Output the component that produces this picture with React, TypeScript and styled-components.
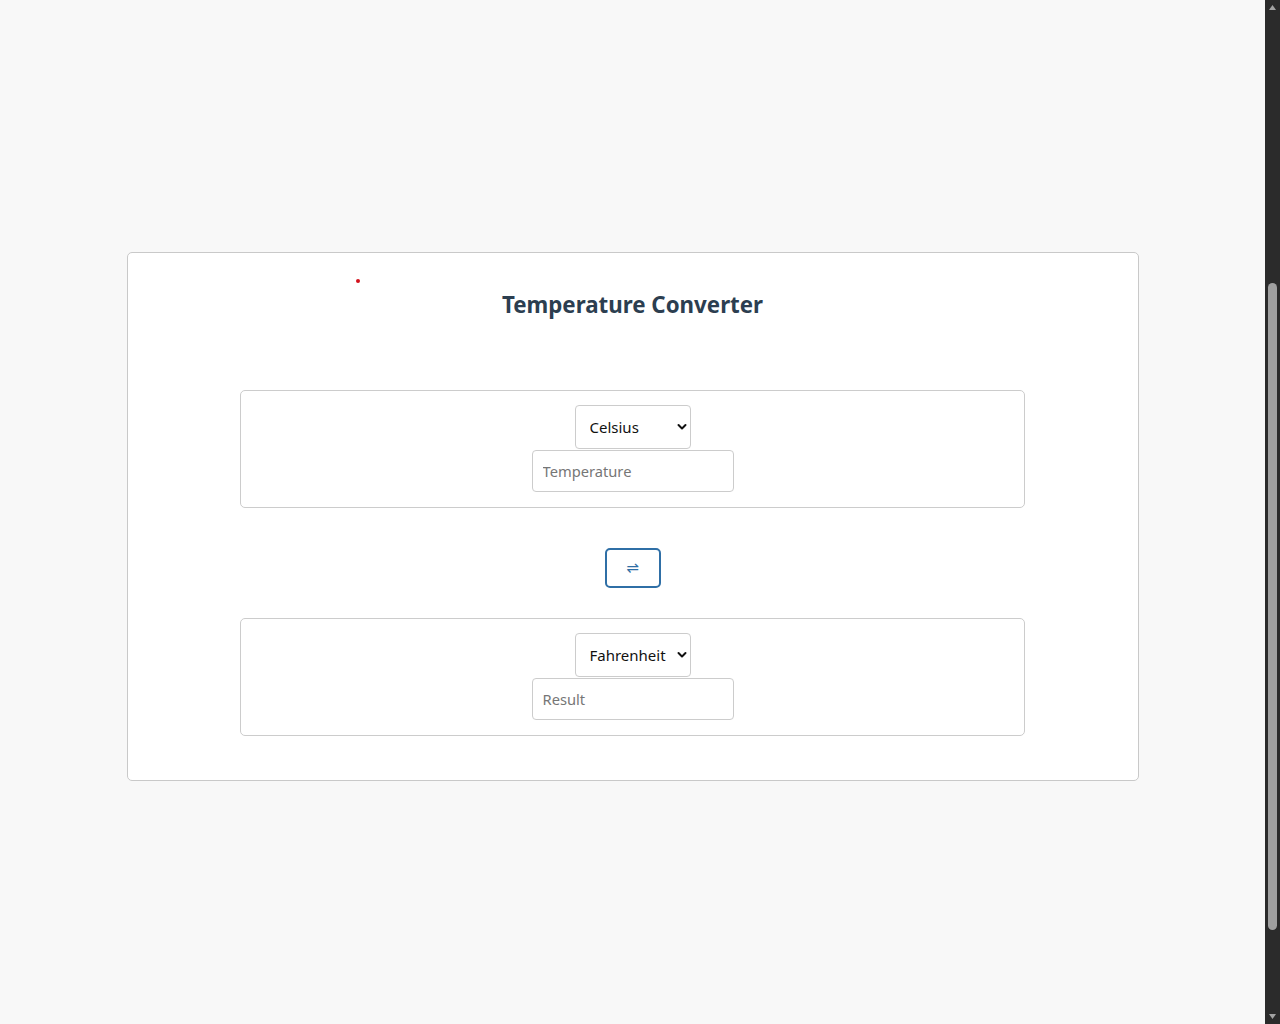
import React, { useState } from "react";
import styled, { createGlobalStyle } from "styled-components";

const GlobalStyle = createGlobalStyle`
  html, body {
    margin: 0;
    background: #f8f8f8;
    overflow: hidden;
  }
  body {
    font-family: "Noto Sans", "Open Sans", "Liberation Sans", sans-serif;
  }
`;

const Page = styled.div`
  box-sizing: border-box;
  height: 100vh;
  margin-right: 15px;
  padding-top: 252px;
  display: flex;
  flex-direction: column;
  align-items: center;
`;

const ScrollBar = styled.div`
  position: fixed;
  top: 0;
  right: 0;
  width: 15px;
  height: 100vh;
  background: #2b2b2b;
  display: flex;
  flex-direction: column;
  align-items: center;
`;

const ScrollArrow = styled.svg`
  flex: none;
  width: 15px;
  height: 16px;
`;

const ScrollTrack = styled.div`
  flex: 1;
  width: 100%;
  display: flex;
  flex-direction: column;
  align-items: center;
`;

const ScrollThumb = styled.div`
  margin-top: 267px;
  width: 9px;
  height: 647px;
  border-radius: 5px;
  background: #a0a0a0;
`;

const Card = styled.section`
  position: relative;
  box-sizing: border-box;
  width: 80%;
  background: #ffffff;
  border: 1px solid #c9c9c9;
  border-radius: 5px;
  padding: 33px 0 44px;
  display: flex;
  flex-direction: column;
  align-items: center;
`;

const Dot = styled.span`
  position: absolute;
  left: 228px;
  top: 26px;
  width: 4px;
  height: 4px;
  border-radius: 50%;
  background: #d3111c;
`;

const Title = styled.h1`
  margin: 0 0 66px;
  font-size: 22.3px;
  line-height: 38px;
  font-weight: 700;
  color: #2c3e50;
`;

const Panel = styled.div`
  box-sizing: border-box;
  width: 785px;
  border: 1px solid #cccccc;
  border-radius: 5px;
  padding: 14px 0 15px;
  display: flex;
  flex-direction: column;
  align-items: center;
  gap: 1px;
`;

const SelectWrap = styled.div`
  position: relative;
  display: inline-flex;
`;

const Select = styled.select`
  appearance: none;
  box-sizing: border-box;
  width: 116px;
  height: 44px;
  padding: 0 0 0 14px;
  border: 1px solid #cccccc;
  border-radius: 4px;
  background: #ffffff;
  color: #111111;
  font-family: inherit;
  font-size: 15px;
  outline: none;
`;

const Chevron = styled.svg`
  position: absolute;
  right: 4px;
  top: 18px;
  width: 10px;
  height: 8px;
  pointer-events: none;
`;

const Input = styled.input`
  box-sizing: border-box;
  width: 202px;
  height: 42px;
  padding: 0 10px;
  border: 1px solid #cccccc;
  border-radius: 4px;
  font-family: inherit;
  font-size: 14.7px;
  color: #222222;
  outline: none;
  &::placeholder {
    color: #767676;
  }
`;

const SwapButton = styled.button`
  box-sizing: border-box;
  width: 56px;
  height: 40px;
  margin: 40px 0 30px;
  border: 2px solid #2f6fa6;
  border-radius: 5px;
  background: #ffffff;
  color: #2f6fa6;
  font-family: "DejaVu Sans", sans-serif;
  font-size: 15px;
  line-height: 1;
  padding: 0;
  cursor: pointer;
`;

type UnitSelectProps = {
  value: string;
  onChange: (v: string) => void;
};

const UnitSelect = ({ value, onChange }: UnitSelectProps) => (
  <SelectWrap>
    <Select value={value} onChange={(e) => onChange(e.target.value)}>
      <option value="Celsius">Celsius</option>
      <option value="Fahrenheit">Fahrenheit</option>
      <option value="Kelvin">Kelvin</option>
    </Select>
    <Chevron viewBox="0 0 10 8">
      <polyline
        points="1.5,2 5,5.5 8.5,2"
        fill="none"
        stroke="#111"
        strokeWidth="2"
        strokeLinecap="round"
        strokeLinejoin="round"
      />
    </Chevron>
  </SelectWrap>
);

export default function App() {
  const [from, setFrom] = useState("Celsius");
  const [to, setTo] = useState("Fahrenheit");
  const [value, setValue] = useState("");

  const convert = (): string => {
    const n = parseFloat(value);
    if (isNaN(n)) return "";
    let c = n;
    if (from === "Fahrenheit") c = ((n - 32) * 5) / 9;
    if (from === "Kelvin") c = n - 273.15;
    let r = c;
    if (to === "Fahrenheit") r = (c * 9) / 5 + 32;
    if (to === "Kelvin") r = c + 273.15;
    return String(Math.round(r * 100) / 100);
  };

  return (
    <>
      <GlobalStyle />
      <Page>
        <Card>
          <Dot />
          <Title>Temperature Converter</Title>
          <Panel>
            <UnitSelect value={from} onChange={setFrom} />
            <Input
              placeholder="Temperature"
              value={value}
              onChange={(e) => setValue(e.target.value)}
            />
          </Panel>
          <SwapButton
            onClick={() => {
              setFrom(to);
              setTo(from);
            }}
          >
            ⇌
          </SwapButton>
          <Panel>
            <UnitSelect value={to} onChange={setTo} />
            <Input placeholder="Result" value={convert()} readOnly />
          </Panel>
        </Card>
      </Page>
      <ScrollBar>
        <ScrollArrow viewBox="0 0 15 16">
          <polygon points="7.5,5 11,10 4,10" fill="#a3a3a3" />
        </ScrollArrow>
        <ScrollTrack>
          <ScrollThumb />
        </ScrollTrack>
        <ScrollArrow viewBox="0 0 15 16">
          <polygon points="4,6 11,6 7.5,11" fill="#a3a3a3" />
        </ScrollArrow>
      </ScrollBar>
    </>
  );
}
